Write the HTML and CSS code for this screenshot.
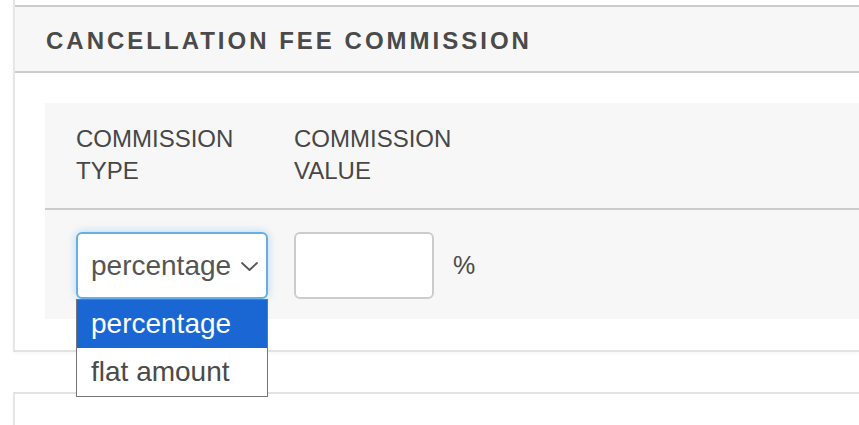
FILE: index.html
```html
<!DOCTYPE html>
<html lang="en">
<head>
<meta charset="utf-8">
<title>Cancellation Fee Commission</title>
<link rel="stylesheet" href="styles.css">
</head>
<body>
<div class="page">
  <section class="card">
    <header class="card-header">CANCELLATION FEE COMMISSION</header>
    <div class="card-body">
      <div class="table">
        <div class="row head">
          <div class="col col-type">COMMISSION<br>TYPE</div>
          <div class="col col-value">COMMISSION<br>VALUE</div>
        </div>
        <div class="row body">
          <div class="col col-type">
            <div class="select-wrap">
              <div class="select" role="combobox" aria-expanded="true">
                <span class="select-text">percentage</span>
                <svg class="chevron" width="17" height="9" viewBox="0 0 17 9" aria-hidden="true">
                  <polyline points="1,1 8.5,8 16,1" fill="none" stroke="#555" stroke-width="1.8" stroke-linecap="round" stroke-linejoin="round"/>
                </svg>
              </div>
              <ul class="dropdown" role="listbox">
                <li class="option selected" role="option">percentage</li>
                <li class="option" role="option">flat amount</li>
              </ul>
            </div>
          </div>
          <div class="col col-value value-cell">
            <input class="text-input" type="text" aria-label="Commission value">
            <span class="unit">%</span>
          </div>
        </div>
      </div>
    </div>
  </section>
  <section class="card card-next"></section>
</div>
</body>
</html>
```
FILE: styles.css
```css
html, body {
  margin: 0;
  padding: 0;
  background: #ffffff;
}

body {
  font-family: "Liberation Sans", Arial, sans-serif;
  color: #4a4a4a;
  overflow: hidden;
}

.page {
  padding-left: 13px;
}

.card {
  background: #ffffff;
  border-left: 2px solid #e6e6e6;
  border-bottom: 2px solid #e2e2e2;
  padding-top: 5px;
  box-shadow: 0 2px 3px rgba(0, 0, 0, 0.03);
}

.card-header {
  background: #f7f7f7;
  border-top: 2px solid #cccccc;
  border-bottom: 2px solid #cccccc;
  padding: 22px 0 19px 31px;
  font-size: 24px;
  line-height: 23px;
  font-weight: 700;
  letter-spacing: 3px;
  color: #4a4a4a;
  white-space: nowrap;
}

.card-body {
  padding: 30px 0 31px 30px;
}

.table {
  background: #f7f7f7;
}

.row {
  display: flex;
  gap: 26px;
  padding-left: 31px;
}

.row.head {
  padding-top: 20px;
  padding-bottom: 21px;
  border-bottom: 2px solid #cccccc;
  font-size: 24px;
  line-height: 32px;
  color: #474747;
}

.row.body {
  padding-top: 22px;
  padding-bottom: 20px;
}

.col-type {
  width: 192px;
  flex: none;
}

.col-value {
  flex: none;
}

.value-cell {
  display: flex;
  align-items: center;
  gap: 19px;
}

.select-wrap {
  position: relative;
}

.select {
  box-sizing: border-box;
  height: 67px;
  width: 192px;
  border: 2px solid #66afe9;
  border-radius: 6px;
  background: #ffffff;
  box-shadow: 0 0 9px rgba(102, 175, 233, 0.45);
  display: flex;
  align-items: center;
  justify-content: space-between;
  padding: 0 8px 0 13px;
  font-size: 28px;
  color: #555555;
}

.chevron {
  display: block;
  margin-top: 1px;
}

.dropdown {
  position: absolute;
  top: 67px;
  left: 0;
  width: 192px;
  box-sizing: border-box;
  margin: 0;
  padding: 0;
  list-style: none;
  background: #ffffff;
  border: 1px solid #767676;
  z-index: 10;
}

.option {
  height: 48px;
  line-height: 48px;
  padding-left: 14px;
  font-size: 28px;
  color: #4a4a4a;
}

.option.selected {
  background: #1a67d3;
  color: #ffffff;
}

.text-input {
  box-sizing: border-box;
  width: 140px;
  height: 67px;
  border: 2px solid #cccccc;
  border-radius: 6px;
  background: #ffffff;
  margin: 0;
  padding: 0 12px;
  font-family: inherit;
  font-size: 24px;
  outline: none;
}

.unit {
  font-size: 25px;
  color: #4a4a4a;
  line-height: 1;
}

.card-next {
  margin-top: 40px;
  border-top: 2px solid #e2e2e2;
  border-bottom: none;
  padding-top: 0;
  height: 120px;
}
```
